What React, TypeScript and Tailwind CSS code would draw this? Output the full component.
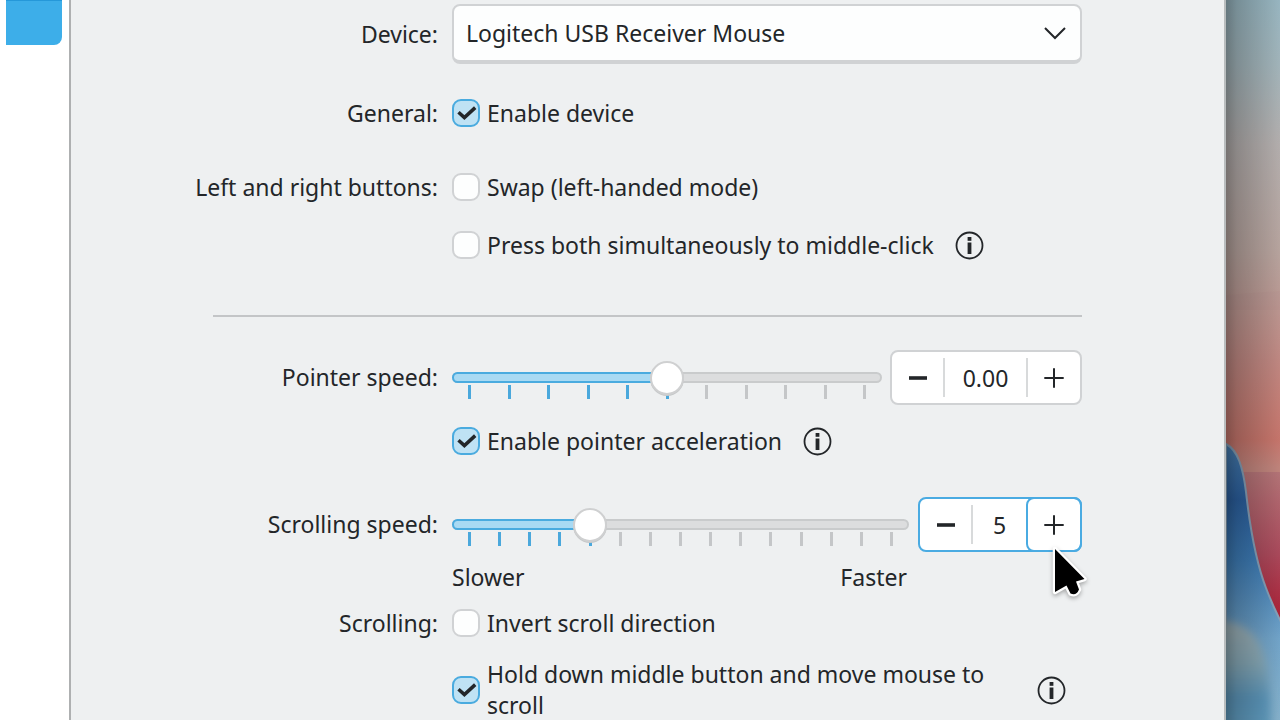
import { useState, type ReactNode } from "react";

const CONTROL_BORDER = "border-[#d0d2d4]";

function FormRow({ label, htmlFor, className = "", children }: {
  label?: string;
  htmlFor?: string;
  className?: string;
  children: ReactNode;
}) {
  return (
    <div className={`grid grid-cols-[243px_minmax(0,1fr)] items-center gap-x-[14px] ${className}`}>
      {label && (
        <label htmlFor={htmlFor} className="text-right whitespace-nowrap">
          {label}
        </label>
      )}
      <div className="col-start-2 flex min-h-8 items-center">{children}</div>
    </div>
  );
}

function CheckOption({ id, label, defaultChecked = false, info }: {
  id: string;
  label: string;
  defaultChecked?: boolean;
  info?: string;
}) {
  return (
    <div className="flex items-center gap-[21px]">
      <div className="flex items-center gap-[7px]">
        <span className="relative flex shrink-0">
          <input
            id={id}
            type="checkbox"
            defaultChecked={defaultChecked}
            className={`peer size-7 appearance-none rounded-[9px] border-2 bg-[#fdfefe] ${CONTROL_BORDER} checked:border-[#4aabdf] checked:bg-[#bfe2f4]`}
          />
          <svg viewBox="0 0 28 28" className="pointer-events-none absolute inset-0 hidden size-7 peer-checked:block">
            <path d="M6.5 13.2 L12.4 18.6 L23.2 8.6" fill="none" stroke="#232629" strokeWidth="3.5" />
          </svg>
        </span>
        <label htmlFor={id}>{label}</label>
      </div>
      {info && <InfoButton label={info} />}
    </div>
  );
}

function InfoButton({ label }: { label: string }) {
  return (
    <button type="button" aria-label={label} className="mr-4 shrink-0">
      <svg viewBox="0 0 29 29" className="size-[29px]">
        <circle cx="14.5" cy="14.5" r="13" fill="none" stroke="#232629" strokeWidth="1.8" />
        <rect x="12.6" y="6" width="3.8" height="3.8" fill="#232629" />
        <rect x="12.6" y="11.5" width="3.8" height="11.5" fill="#232629" />
      </svg>
    </button>
  );
}

function Slider({ id, min, max, step, ticks, value, onChange }: {
  id: string;
  min: number;
  max: number;
  step: number;
  ticks: number;
  value: number;
  onChange: (value: number) => void;
}) {
  const ratio = (value - min) / (max - min);

  return (
    <div className="relative h-[55px] flex-1">
      <div className="absolute inset-x-0 top-[22px] h-[11px] rounded-full border-2 border-[#c9cbcc] bg-[#dcddde]" />
      <div
        className="absolute left-0 top-[22px] h-[11px] rounded-full border-2 border-[#4aabdf] bg-[#a9daf3]"
        style={{ width: `${ratio * 100}%` }}
      />
      <div className="absolute inset-x-4 top-[35px] flex justify-between">
        {Array.from({ length: ticks }, (_, i) => (
          <span
            key={i}
            className={`h-[14px] w-[3px] ${i / (ticks - 1) <= ratio + 0.001 ? "bg-[#4aa8dc]" : "bg-[#c4c6c8]"}`}
          />
        ))}
      </div>
      <input
        id={id}
        type="range"
        min={min}
        max={max}
        step={step}
        value={value}
        onChange={(e) => onChange(Number(e.target.value))}
        className="absolute inset-0 h-full w-full appearance-none bg-transparent [&::-webkit-slider-thumb]:size-[34px] [&::-webkit-slider-thumb]:appearance-none [&::-webkit-slider-thumb]:rounded-full [&::-webkit-slider-thumb]:border-2 [&::-webkit-slider-thumb]:border-[#cfd0d1] [&::-webkit-slider-thumb]:bg-white [&::-webkit-slider-thumb]:shadow-[0_1px_0_#c6c8c9]"
      />
    </div>
  );
}

function MinusIcon() {
  return (
    <svg viewBox="0 0 20 20" className="size-5">
      <path d="M1 10 H19" stroke="#232629" strokeWidth="3.6" />
    </svg>
  );
}

function PlusIcon() {
  return (
    <svg viewBox="0 0 20 20" className="size-5">
      <path d="M0.3 10 H19.7 M10 0.3 V19.7" stroke="#232629" strokeWidth="2" />
    </svg>
  );
}

function SpinBox({ label, text, active = false, onStep, children }: {
  label: string;
  text: string;
  active?: boolean;
  onStep: (direction: number) => void;
  children?: ReactNode;
}) {
  return (
    <div className={`relative flex h-[55px] items-center rounded-lg border-2 bg-white ${active ? "border-[#4aabe2]" : CONTROL_BORDER}`}>
      <button
        type="button"
        aria-label={`Decrease ${label}`}
        onClick={() => onStep(-1)}
        className="flex h-[39px] w-[53px] items-center justify-center border-r-2 border-[#d8dadb]"
      >
        <MinusIcon />
      </button>
      <input
        type="text"
        readOnly
        aria-label={label}
        value={text}
        className={`h-[39px] bg-transparent text-center outline-none ${active ? "w-[53px]" : "w-[83px] border-r-2 border-[#d8dadb]"}`}
      />
      <button
        type="button"
        aria-label={`Increase ${label}`}
        onClick={() => onStep(1)}
        className={active
          ? "-my-[2px] -mr-[2px] flex h-[55px] w-[56px] items-center justify-center rounded-lg border-2 border-[#4aabe2]"
          : "flex h-[39px] w-[52px] items-center justify-center"}
      >
        <PlusIcon />
      </button>
      {children}
    </div>
  );
}

function Cursor() {
  return (
    <svg viewBox="0 0 38 54" className="pointer-events-none absolute -right-2 top-[47px] z-10 h-[54px] w-[38px] drop-shadow-[0_2px_2px_rgba(0,0,0,0.3)]">
      <path
        d="M5 3 L34.5 33 L26 35.5 L29 43.5 Q26.5 50 20.5 47.5 L16.5 39.5 L5 46 Z"
        fill="#000"
        stroke="#fff"
        strokeWidth="4.5"
        strokeLinejoin="round"
        paintOrder="stroke"
      />
    </svg>
  );
}

function Wallpaper() {
  return (
    <svg viewBox="0 0 54 720" preserveAspectRatio="none" className="block h-full w-full">
      <defs>
        <linearGradient id="sky" x1="0" y1="0" x2="0" y2="1">
          <stop offset="0" stopColor="#9cbbc6" />
          <stop offset="0.09" stopColor="#a6b9bf" />
          <stop offset="0.2" stopColor="#b8b3b2" />
          <stop offset="0.35" stopColor="#bca8a2" />
          <stop offset="0.41" stopColor="#bf9e98" />
          <stop offset="0.5" stopColor="#c48b85" />
          <stop offset="0.61" stopColor="#cb786e" />
          <stop offset="0.65" stopColor="#c4877f" />
        </linearGradient>
        <linearGradient id="red" x1="0" y1="0" x2="0" y2="1">
          <stop offset="0" stopColor="#b8777a" />
          <stop offset="0.5" stopColor="#ae4c5e" />
          <stop offset="1" stopColor="#b01830" />
        </linearGradient>
        <linearGradient id="blue" x1="0" y1="0" x2="0" y2="1">
          <stop offset="0" stopColor="#4a82b6" />
          <stop offset="0.2" stopColor="#2c62a3" />
          <stop offset="0.42" stopColor="#3f7fba" />
          <stop offset="0.7" stopColor="#74a8ce" />
          <stop offset="1" stopColor="#8ab6d0" />
        </linearGradient>
        <linearGradient id="glow" x1="0" y1="0" x2="0" y2="1">
          <stop offset="0" stopColor="#a3b5ba" />
          <stop offset="0.35" stopColor="#8badbb" />
          <stop offset="0.65" stopColor="#5d9ac0" />
          <stop offset="1" stopColor="#68a6c8" />
        </linearGradient>
        <linearGradient id="shade" x1="0" y1="0" x2="1" y2="0">
          <stop offset="0" stopColor="#000" stopOpacity="0.36" />
          <stop offset="0.2" stopColor="#000" stopOpacity="0.24" />
          <stop offset="1" stopColor="#000" stopOpacity="0.03" />
        </linearGradient>
        <filter id="soft" x="-30%" y="-30%" width="160%" height="160%">
          <feGaussianBlur stdDeviation="4" />
        </filter>
      </defs>
      <rect width="54" height="720" fill="url(#sky)" />
      <path d="M0 295 L54 291 V310 H0 Z" fill="#b06f70" opacity="0.06" />
      <rect y="472" width="54" height="160" fill="url(#red)" />
      <path
        d="M0 444 C12 450 17 468 20 492 C24 528 30 562 40 588 C46 604 50 612 55 622 V722 H0 Z"
        fill="url(#blue)"
        stroke="#8aa5bd"
        strokeWidth="2"
      />
      <path d="M-16 621 C16 618 34 634 40 664 C44 686 45 710 45 740 H-16 Z" fill="url(#glow)" filter="url(#soft)" />
      <rect width="54" height="720" fill="url(#shade)" />
    </svg>
  );
}

export default function App() {
  const [pointerSpeed, setPointerSpeed] = useState(0);
  const [scrollSpeed, setScrollSpeed] = useState(5);

  return (
    <div className="flex h-screen overflow-hidden bg-[#eff0f1] font-['Noto_Sans',sans-serif] text-[23px] leading-[31px] text-[#232629]">
      <aside className="w-[69px] shrink-0 bg-white pl-[6px]">
        <div className="h-[45px] w-14 rounded-br-lg border-t border-[#2598d9] bg-[#3daee9]" />
      </aside>

      <main className="min-w-0 flex-1 border-l-2 border-r-2 border-l-[#aeb0b1] border-r-[#b9bdbe] bg-[#eef0f1] pl-[124px] pr-[142px] pt-1">
        <FormRow label="Device:" htmlFor="device">
          <div className="relative flex-1">
            <select
              id="device"
              className={`block h-[60px] w-full appearance-none rounded-lg border-2 border-b-4 bg-[#fdfefe] pl-3 pr-14 ${CONTROL_BORDER}`}
            >
              <option>Logitech USB Receiver Mouse</option>
            </select>
            <svg viewBox="0 0 24 14" className="pointer-events-none absolute right-[15px] top-[22px] h-[14px] w-6">
              <path d="M2 2 L12 12 L22 2" fill="none" stroke="#232629" strokeWidth="2" />
            </svg>
          </div>
        </FormRow>

        <FormRow label="General:" htmlFor="enable-device" className="mt-[33px]">
          <CheckOption id="enable-device" label="Enable device" defaultChecked />
        </FormRow>

        <FormRow label="Left and right buttons:" htmlFor="swap" className="mt-[42px]">
          <CheckOption id="swap" label="Swap (left-handed mode)" />
        </FormRow>
        <FormRow className="mt-[26px]">
          <CheckOption id="middle-click" label="Press both simultaneously to middle-click" info="About middle-click" />
        </FormRow>

        <hr className="ml-[18px] mt-[54px] border-t-2 border-[#c3c5c7]" />

        <FormRow label="Pointer speed:" htmlFor="pointer-speed" className="mt-[33px]">
          <div className="flex flex-1 gap-2">
            <Slider id="pointer-speed" min={-1} max={1} step={0.2} ticks={11} value={pointerSpeed} onChange={setPointerSpeed} />
            <SpinBox
              label="pointer speed"
              text={pointerSpeed.toFixed(2)}
              onStep={(d) => setPointerSpeed((v) => Math.min(1, Math.max(-1, v + d * 0.2)))}
            />
          </div>
        </FormRow>
        <FormRow className="mt-5">
          <CheckOption id="acceleration" label="Enable pointer acceleration" defaultChecked info="About pointer acceleration" />
        </FormRow>

        <FormRow label="Scrolling speed:" htmlFor="scroll-speed" className="mt-10">
          <div className="flex flex-1 gap-[9px]">
            <Slider id="scroll-speed" min={1} max={15} step={1} ticks={15} value={scrollSpeed} onChange={setScrollSpeed} />
            <SpinBox
              label="scrolling speed"
              text={String(scrollSpeed)}
              active
              onStep={(d) => setScrollSpeed((v) => Math.min(15, Math.max(1, v + d)))}
            >
              <Cursor />
            </SpinBox>
          </div>
        </FormRow>
        <FormRow className="mt-[9px]">
          <div className="flex flex-1 justify-between pr-[175px]">
            <span>Slower</span>
            <span>Faster</span>
          </div>
        </FormRow>

        <FormRow label="Scrolling:" htmlFor="invert" className="mt-[14px]">
          <CheckOption id="invert" label="Invert scroll direction" />
        </FormRow>
        <FormRow className="mt-5">
          <CheckOption
            id="hold-middle"
            label="Hold down middle button and move mouse to scroll"
            defaultChecked
            info="About middle button scrolling"
          />
        </FormRow>
      </main>

      <div className="w-[54px] shrink-0">
        <Wallpaper />
      </div>
    </div>
  );
}
